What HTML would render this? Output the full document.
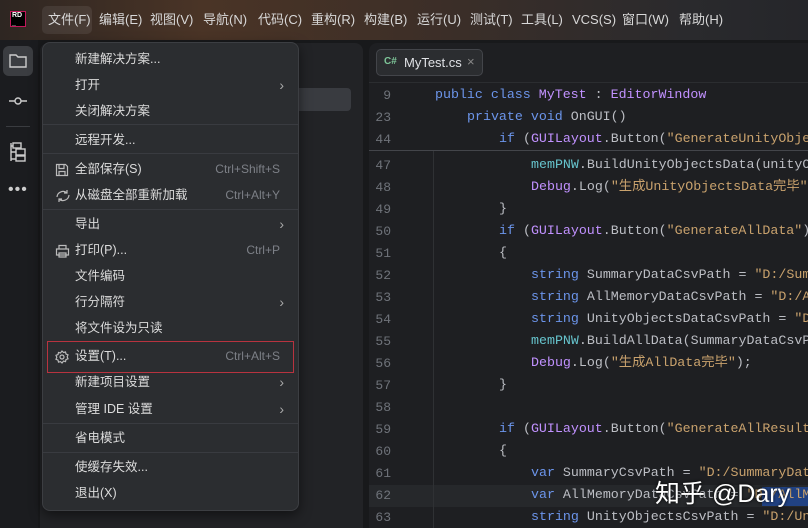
<!DOCTYPE html><html><head><meta charset="utf-8"><style>
*{margin:0;padding:0;box-sizing:border-box}
body{width:808px;height:528px;overflow:hidden;background:#18191b;font-family:"Liberation Sans","Noto Sans CJK SC",sans-serif;position:relative;color:#dfe1e5}
.top{position:absolute;left:0;top:0;width:808px;height:40px;background:linear-gradient(90deg,#2e2622 0%,#4a3426 25%,#3e2f27 50%,#2a2a2d 85%,#25262a 100%)}
.mi{position:absolute;top:12px;font-size:13px;line-height:16px;color:#d8d8d8}
.left{position:absolute;left:0;top:40px;width:38px;height:488px;background:#1b1c1f}
.proj{position:absolute;left:40px;top:43px;width:323px;height:485px;background:#222326;border-radius:8px 8px 0 0}
.ed{position:absolute;left:369px;top:43px;width:445px;height:485px;background:#1e1f22;border-radius:8px 0 0 0}
.code{position:absolute;font-family:"Liberation Mono","Noto Sans CJK SC",monospace;font-size:13.3px;line-height:16px;white-space:pre;color:#bcbec4}
.ln{position:absolute;left:369px;width:22px;text-align:right;font-family:"Liberation Mono",monospace;font-size:13px;line-height:16px;color:#6f737a}
.k{color:#6c95eb}.c{color:#c191ff}.s{color:#c9a26d}.t{color:#66c3cc}
.menu{position:absolute;left:42px;top:42px;width:257px;height:469px;background:#2b2d30;border:1px solid #3c3e42;border-radius:8px;box-shadow:0 4px 12px rgba(0,0,0,.5)}
.it{position:absolute;left:32px;font-size:12.5px;line-height:14px;color:#dcdcdc}
.sc{position:absolute;right:18px;font-size:12px;line-height:14px;color:#7d8087}
.ar{position:absolute;right:14px;font-size:14px;line-height:14px;color:#aaa}
.sep{position:absolute;left:0;right:0;height:1px;background:#393b40}
</style></head><body>
<div class="top"></div>
<div style="position:absolute;left:10px;top:11px;width:16px;height:16px;background:#000;border:1px solid #c2185b;font-size:7px;color:#fff;font-weight:bold;padding-left:1px;line-height:8px">RD<br>_</div>
<div style="position:absolute;left:42px;top:6px;width:50px;height:28px;background:rgba(255,255,255,.08);border-radius:5px"></div>
<span class="mi" style="left:48px">文件(F)</span><span class="mi" style="left:99px">编辑(E)</span><span class="mi" style="left:150px">视图(V)</span><span class="mi" style="left:203px">导航(N)</span><span class="mi" style="left:258px">代码(C)</span><span class="mi" style="left:311px">重构(R)</span><span class="mi" style="left:364px">构建(B)</span><span class="mi" style="left:417px">运行(U)</span><span class="mi" style="left:470px">测试(T)</span><span class="mi" style="left:521px">工具(L)</span><span class="mi" style="left:572px">VCS(S)</span><span class="mi" style="left:622px">窗口(W)</span><span class="mi" style="left:679px">帮助(H)</span>
<div class="left"></div>
<div style="position:absolute;left:3px;top:46px;width:30px;height:30px;background:#3b3d41;border-radius:6px"></div>
<svg style="position:absolute;left:8px;top:51px" width="20" height="20" fill="none" stroke="#ccc" stroke-width="1.4"><path d="M2 4h6l2 2h8v10H2z"/></svg>
<svg style="position:absolute;left:8px;top:91px" width="20" height="20" fill="none" stroke="#ccc" stroke-width="1.4"><circle cx="10" cy="10" r="3"/><path d="M1 10h6M13 10h6"/></svg>
<div style="position:absolute;left:6px;top:126px;width:24px;height:1px;background:#3a3c40"></div>
<svg style="position:absolute;left:8px;top:141px" width="20" height="22" fill="none" stroke="#ccc" stroke-width="1.4"><path d="M3 2v18M3 5h2M3 11h5M3 18h5"/><rect x="8" y="8" width="9" height="6"/><rect x="8" y="15" width="9" height="5"/><rect x="5" y="2" width="8" height="5"/></svg>
<div style="position:absolute;left:8px;top:181px;font-size:16px;color:#ccc;letter-spacing:1px">•••</div>
<div class="proj"></div>
<div style="position:absolute;left:292px;top:88px;width:59px;height:23px;background:#393b40;border-radius:4px"></div>
<div class="ed"></div>
<div style="position:absolute;left:376px;top:49px;width:107px;height:27px;border:1px solid #43454a;border-radius:5px;background:#2b2d30"></div>
<span style="position:absolute;left:384px;top:56px;font-size:10px;color:#7ec699;font-weight:bold">C#</span>
<span style="position:absolute;left:404px;top:55px;font-size:13px;color:#dfe1e5">MyTest.cs</span>
<span style="position:absolute;left:467px;top:54px;font-size:13px;color:#888">×</span>
<div style="position:absolute;left:369px;top:82px;width:445px;height:1px;background:#2b2d30"></div>
<div style="position:absolute;left:369px;top:150px;width:445px;height:1px;background:#43454a"></div>
<div style="position:absolute;left:369px;top:485px;width:445px;height:22px;background:#26282b"></div>
<div style="position:absolute;left:433px;top:151px;width:1px;height:377px;background:#2f3134"></div>
<div style="position:absolute;left:762px;top:487px;width:50px;height:19px;background:#214283"></div>
<div class="ln" style="top:88px">9</div><div class="code" style="left:435px;top:87px"><span class="k">public class</span> <span class="c">MyTest</span> : <span class="c">EditorWindow</span></div>
<div class="ln" style="top:110px">23</div><div class="code" style="left:467px;top:109px"><span class="k">private void</span> OnGUI()</div>
<div class="ln" style="top:132px">44</div><div class="code" style="left:499px;top:131px"><span class="k">if</span> (<span class="c">GUILayout</span>.Button(<span class="s">"GenerateUnityObje</span></div>
<div class="ln" style="top:158px">47</div><div class="code" style="left:531px;top:157px"><span class="t">memPNW</span>.BuildUnityObjectsData(unityO</div>
<div class="ln" style="top:180px">48</div><div class="code" style="left:531px;top:179px"><span class="c">Debug</span>.Log(<span class="s">"生成UnityObjectsData完毕"</span></div>
<div class="ln" style="top:202px">49</div><div class="code" style="left:499px;top:201px">}</div>
<div class="ln" style="top:224px">50</div><div class="code" style="left:499px;top:223px"><span class="k">if</span> (<span class="c">GUILayout</span>.Button(<span class="s">"GenerateAllData"</span>)</div>
<div class="ln" style="top:246px">51</div><div class="code" style="left:499px;top:245px">{</div>
<div class="ln" style="top:268px">52</div><div class="code" style="left:531px;top:267px"><span class="k">string</span> SummaryDataCsvPath = <span class="s">"D:/Sum</span></div>
<div class="ln" style="top:290px">53</div><div class="code" style="left:531px;top:289px"><span class="k">string</span> AllMemoryDataCsvPath = <span class="s">"D:/A</span></div>
<div class="ln" style="top:312px">54</div><div class="code" style="left:531px;top:311px"><span class="k">string</span> UnityObjectsDataCsvPath = <span class="s">"D</span></div>
<div class="ln" style="top:334px">55</div><div class="code" style="left:531px;top:333px"><span class="t">memPNW</span>.BuildAllData(SummaryDataCsvP</div>
<div class="ln" style="top:356px">56</div><div class="code" style="left:531px;top:355px"><span class="c">Debug</span>.Log(<span class="s">"生成AllData完毕"</span>);</div>
<div class="ln" style="top:378px">57</div><div class="code" style="left:499px;top:377px">}</div>
<div class="ln" style="top:400px">58</div>
<div class="ln" style="top:422px">59</div><div class="code" style="left:499px;top:421px"><span class="k">if</span> (<span class="c">GUILayout</span>.Button(<span class="s">"GenerateAllResult</span></div>
<div class="ln" style="top:444px">60</div><div class="code" style="left:499px;top:443px">{</div>
<div class="ln" style="top:466px">61</div><div class="code" style="left:531px;top:465px"><span class="k">var</span> SummaryCsvPath = <span class="s">"D:/SummaryDat</span></div>
<div class="ln" style="top:488px">62</div><div class="code" style="left:531px;top:487px"><span class="k">var</span> AllMemoryDataCsvPath = <span class="s">"D:/AllM</span></div>
<div class="ln" style="top:510px">63</div><div class="code" style="left:531px;top:509px"><span class="k">string</span> UnityObjectsCsvPath = <span class="s">"D:/Un</span></div>
<div style="position:absolute;left:655px;top:474px;font-size:25px;color:#fff;text-shadow:0 0 3px #000">知乎 @Dary</div>
<div class="menu">
<span class="it" style="top:9px">新建解决方案...</span>
<span class="it" style="top:35px">打开</span><span class="ar" style="top:35px">›</span>
<span class="it" style="top:61px">关闭解决方案</span>
<div class="sep" style="top:81px"></div>
<span class="it" style="top:90px">远程开发...</span>
<div class="sep" style="top:110px"></div>
<svg style="position:absolute;left:12px;top:120px" width="14" height="14" fill="none" stroke="#bbb" stroke-width="1.2"><path d="M1.5 1.5h9l2 2v9h-11z M4 1.5v4h5v-4 M4 12.5v-4h6v4"/></svg>
<span class="it" style="top:119px">全部保存(S)</span><span class="sc" style="top:119px">Ctrl+Shift+S</span>
<svg style="position:absolute;left:12px;top:146px" width="16" height="14" fill="none" stroke="#bbb" stroke-width="1.2"><path d="M2 8a6 6 0 0 1 10-4M14 6a6 6 0 0 1-10 4M12 1v3h-3M4 13v-3h3"/></svg>
<span class="it" style="top:145px">从磁盘全部重新加载</span><span class="sc" style="top:145px">Ctrl+Alt+Y</span>
<div class="sep" style="top:166px"></div>
<span class="it" style="top:174px">导出</span><span class="ar" style="top:174px">›</span>
<svg style="position:absolute;left:12px;top:201px" width="15" height="14" fill="none" stroke="#bbb" stroke-width="1.2"><path d="M4 5V1.5h7V5M1.5 5h12v6h-12zM4 9h7v4H4z"/></svg>
<span class="it" style="top:200px">打印(P)...</span><span class="sc" style="top:200px">Ctrl+P</span>
<span class="it" style="top:226px">文件编码</span>
<span class="it" style="top:252px">行分隔符</span><span class="ar" style="top:252px">›</span>
<span class="it" style="top:278px">将文件设为只读</span>
<div style="position:absolute;left:4px;top:298px;width:247px;height:32px;border:1px solid #b8333f"></div>
<svg style="position:absolute;left:12px;top:307px" width="14" height="14" fill="none" stroke="#bbb" stroke-width="1.2"><circle cx="7" cy="7" r="2"/><path d="M7 1l1.5 1.5 2-.5.5 2 2 .8-.8 2 .8 2-2 .8-.5 2-2-.5L7 13l-1.5-1.4-2 .5-.5-2-2-.8.8-2-.8-2 2-.8.5-2 2 .5z"/></svg>
<span class="it" style="top:306px">设置(T)...</span><span class="sc" style="top:306px">Ctrl+Alt+S</span>
<span class="it" style="top:332px">新建项目设置</span><span class="ar" style="top:332px">›</span>
<span class="it" style="top:359px">管理 IDE 设置</span><span class="ar" style="top:359px">›</span>
<div class="sep" style="top:380px"></div>
<span class="it" style="top:388px">省电模式</span>
<div class="sep" style="top:409px"></div>
<span class="it" style="top:417px">使缓存失效...</span>
<span class="it" style="top:443px">退出(X)</span>
</div>
</body></html>
